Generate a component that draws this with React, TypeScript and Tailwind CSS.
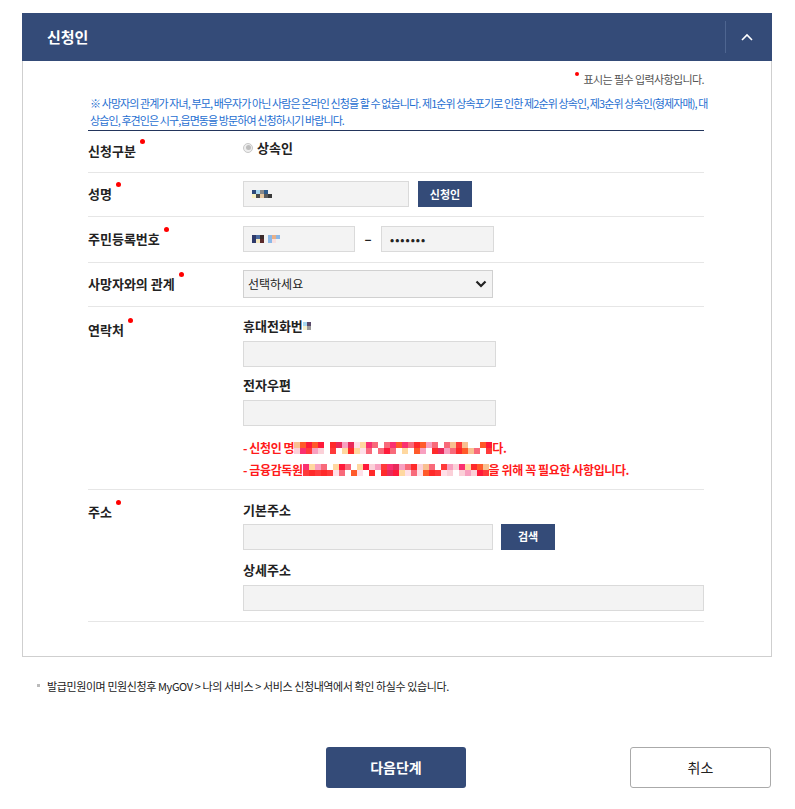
import React from "react";

const FONT = "font-['Noto_Sans_CJK_KR','Noto_Sans',sans-serif]";

// redaction mosaics copied loosely from the reference
const NAME_PIX = [
  ["#2e4a7a", "#a8d8f0", "#8a8a8a", "#2e5a8a", "#f2f2f2"],
  ["#f5f0c0", "#4a4a4a", "#e8c8a0", "#5a5a5a", "#3a3a3a"],
];
const RRN_PIX = [
  ["#2e3a6a", "#4a6aa0", "#3a2a2a", "#f2f2f2", "#8ab8e8", "#e8b088", "#8ab8e8"],
  ["#2e3a6a", "#f5e8c0", "#5a2a2a", "#f2f2f2", "#8ab8e8", "#f8e0e0", "#f2f2f2"],
];
const PHONE_PIX = [
  ["#a8d8f0", "#5a4a6a"],
  ["#f5f0d0", "#9a9a9a"],
];

const REDS = ["#ff2a2a", "#f86a7a", "#ff1a3a", "#fbd0d8", "#ffffff", "#ff5a2a", "#f8a0c0", "#e82a5a", "#ffe0e8", "#ff3a3a", "#f8c090", "#ffffff", "#fa3070", "#ffd8a0"];

function mosaic(seed: number, cols: number) {
  const rows: string[][] = [[], []];
  let s = seed;
  for (let r = 0; r < 2; r++) {
    for (let c = 0; c < cols; c++) {
      s = (s * 9301 + 49297) % 233280;
      rows[r].push(REDS[s % REDS.length]);
    }
  }
  return rows;
}

function Pix({ rows, size }: { rows: string[][]; size: number }) {
  return (
    <span className="inline-flex flex-col align-middle">
      {rows.map((row, i) => (
        <span key={i} className="flex">
          {row.map((c, j) => (
            <span key={j} style={{ background: c, width: size, height: size }} />
          ))}
        </span>
      ))}
    </span>
  );
}

function Dot() {
  return <span className="inline-block w-[5px] h-[5px] rounded-full bg-[#ff0000] relative -top-[12px] ml-[4px]" />;
}

function Label({ children, className = "" }: { children: React.ReactNode; className?: string }) {
  return (
    <div className={`w-[155px] shrink-0 text-[13px] font-bold text-[#222] ${className}`}>
      {children}
      <Dot />
    </div>
  );
}

function Field({ className = "", children }: { className?: string; children?: React.ReactNode }) {
  return (
    <div className={`h-[26px] bg-[#f3f3f3] border border-[#dadada] flex items-center ${className}`}>
      {children}
    </div>
  );
}

function NavyButton({ children, className = "" }: { children: React.ReactNode; className?: string }) {
  return (
    <button className={`h-[26px] bg-[#344b78] text-white text-[11px] font-bold flex items-center justify-center ${className}`}>
      {children}
    </button>
  );
}

export default function App() {
  const line1 = mosaic(7, 33);
  const line2 = mosaic(13, 31);

  return (
    <div className={`w-[795px] h-[809px] bg-white ${FONT} text-[#222]`}>
      <div className="pt-[13px] pl-[22px] pr-[23px]">
        {/* header */}
        <div className="h-[48px] bg-[#344b78] flex items-center">
          <div className="flex-1 pl-[25px] text-white text-[15px] font-bold">신청인</div>
          <div className="w-px h-[32px] bg-[#4e6590]" />
          <div className="w-[46px] pr-[4px] flex justify-center">
            <svg width="12" height="8" viewBox="0 0 12 8" fill="none">
              <polyline points="1,7 6,2 11,7" stroke="white" strokeWidth="1.6" />
            </svg>
          </div>
        </div>

        {/* panel */}
        <div className="border border-t-0 border-[#cfcfcf] pl-[65px] pr-[67px] pb-[34px]">
          <div className="pt-[10px] flex justify-end items-center text-[11px] text-[#555] tracking-[-0.6px]">
            <span className="inline-block w-[4px] h-[4px] rounded-full bg-[#ff0000] relative -top-[5px] mr-[5px]" />
            표시는 필수 입력사항입니다.
          </div>

          <div className="mt-[7px] pl-[2px] text-[11px] leading-[17px] text-[#1f6fd1] tracking-[-0.9px] whitespace-nowrap pb-[1px] border-b border-[#23355c]">
            ※ 사망자의 관계가 자녀, 부모, 배우자가 아닌 사람은 온라인 신청을 할 수 없습니다. 제1순위 상속포기로 인한 제2순위 상속인, 제3순위 상속인(형제자매), 대
            <br />
            상습인, 후견인은 시구,읍면동을 방문하여 신청하시기 바랍니다.
          </div>

          {/* 신청구분 */}
          <div className="h-[42px] flex items-center border-b border-[#e6e6e6]">
            <Label>신청구분</Label>
            <div className="flex items-center gap-[4px] -mt-[7px]">
              <span className="w-[10px] h-[10px] rounded-full border border-[#c8c8c8] bg-[#eee] flex items-center justify-center">
                <span className="w-[5px] h-[5px] rounded-full bg-[#bdbdbd]" />
              </span>
              <span className="text-[13px] font-bold">상속인</span>
            </div>
          </div>

          {/* 성명 */}
          <div className="h-[44px] flex items-center border-b border-[#e6e6e6]">
            <Label>성명</Label>
            <Field className="w-[166px] pl-[8px]">
              <Pix rows={NAME_PIX} size={4} />
            </Field>
            <NavyButton className="ml-[9px] w-[54px]">신청인</NavyButton>
          </div>

          {/* 주민등록번호 */}
          <div className="h-[46px] flex items-center border-b border-[#e6e6e6]">
            <Label>주민등록번호</Label>
            <Field className="w-[112px] pl-[8px]">
              <Pix rows={RRN_PIX} size={4} />
            </Field>
            <span className="w-[26px] text-center text-[13px] font-bold">–</span>
            <Field className="w-[113px] pl-[8px] text-[11px] tracking-[1px] font-bold">•••••••</Field>
          </div>

          {/* 사망자와의 관계 */}
          <div className="h-[44px] flex items-center border-b border-[#e6e6e6]">
            <Label>사망자와의 관계</Label>
            <div className="w-[250px] h-[28px] bg-[#f3f3f3] border border-[#d0d0d0] flex items-center justify-between px-[4px]">
              <span className="text-[12px] text-[#222]">선택하세요</span>
              <svg width="12" height="8" viewBox="0 0 12 8" fill="none" className="mr-[1px]">
                <polyline points="1.5,1.5 6,6 10.5,1.5" stroke="#222" strokeWidth="2.2" />
              </svg>
            </div>
          </div>

          {/* 연락처 */}
          <div className="flex items-start border-b border-[#e6e6e6] pt-[11px] pb-[11px]">
            <Label className="pt-[2px]">연락처</Label>
            <div className="flex flex-col">
              <div className="text-[13px] font-bold leading-[16px] flex items-center">
                휴대전화번<Pix rows={PHONE_PIX} size={4} />
              </div>
              <Field className="w-[253px] mt-[7px]" />
              <div className="text-[13px] font-bold leading-[16px] mt-[10px]">전자우편</div>
              <Field className="w-[253px] mt-[7px]" />
              <div className="mt-[14px] text-[12px] font-bold text-[#ff1a1a] leading-[16px] tracking-[-0.4px] flex items-center whitespace-nowrap">
                - 신청인 명<Pix rows={line1} size={6} />다.
              </div>
              <div className="mt-[6px] text-[12px] font-bold text-[#ff1a1a] leading-[16px] tracking-[-0.4px] flex items-center whitespace-nowrap">
                - 금융감독원<Pix rows={line2} size={6} />을 위해 꼭 필요한 사항입니다.
              </div>
            </div>
          </div>

          {/* 주소 */}
          <div className="flex items-start border-b border-[#e6e6e6] pt-[12px] pb-[10px]">
            <Label className="pt-0">주소</Label>
            <div className="flex flex-col flex-1">
              <div className="text-[13px] font-bold leading-[16px]">기본주소</div>
              <div className="flex mt-[6px]">
                <Field className="w-[250px]" />
                <NavyButton className="ml-[8px] w-[54px]">검색</NavyButton>
              </div>
              <div className="text-[13px] font-bold leading-[16px] mt-[12px]">상세주소</div>
              <Field className="w-full mt-[7px]" />
            </div>
          </div>
        </div>
      </div>

      {/* footnote */}
      <div className="mt-[21px] pl-[37px] flex items-center text-[11px] text-[#222] tracking-[-0.4px]">
        <span className="w-[3px] h-[3px] bg-[#bbb] mr-[7px]" />
        발급민원이며 민원신청후 MyGOV &gt; 나의 서비스 &gt; 서비스 신청내역에서 확인 하실수 있습니다.
      </div>

      {/* buttons */}
      <div className="mt-[53px] flex pl-[326px]">
        <button className="w-[140px] h-[41px] rounded-[3px] bg-[#344b78] text-white text-[14px] font-bold">다음단계</button>
        <button className="ml-[164px] w-[141px] h-[41px] rounded-[3px] bg-white border border-[#aaa] text-[14px] text-[#222]">취소</button>
      </div>
    </div>
  );
}
